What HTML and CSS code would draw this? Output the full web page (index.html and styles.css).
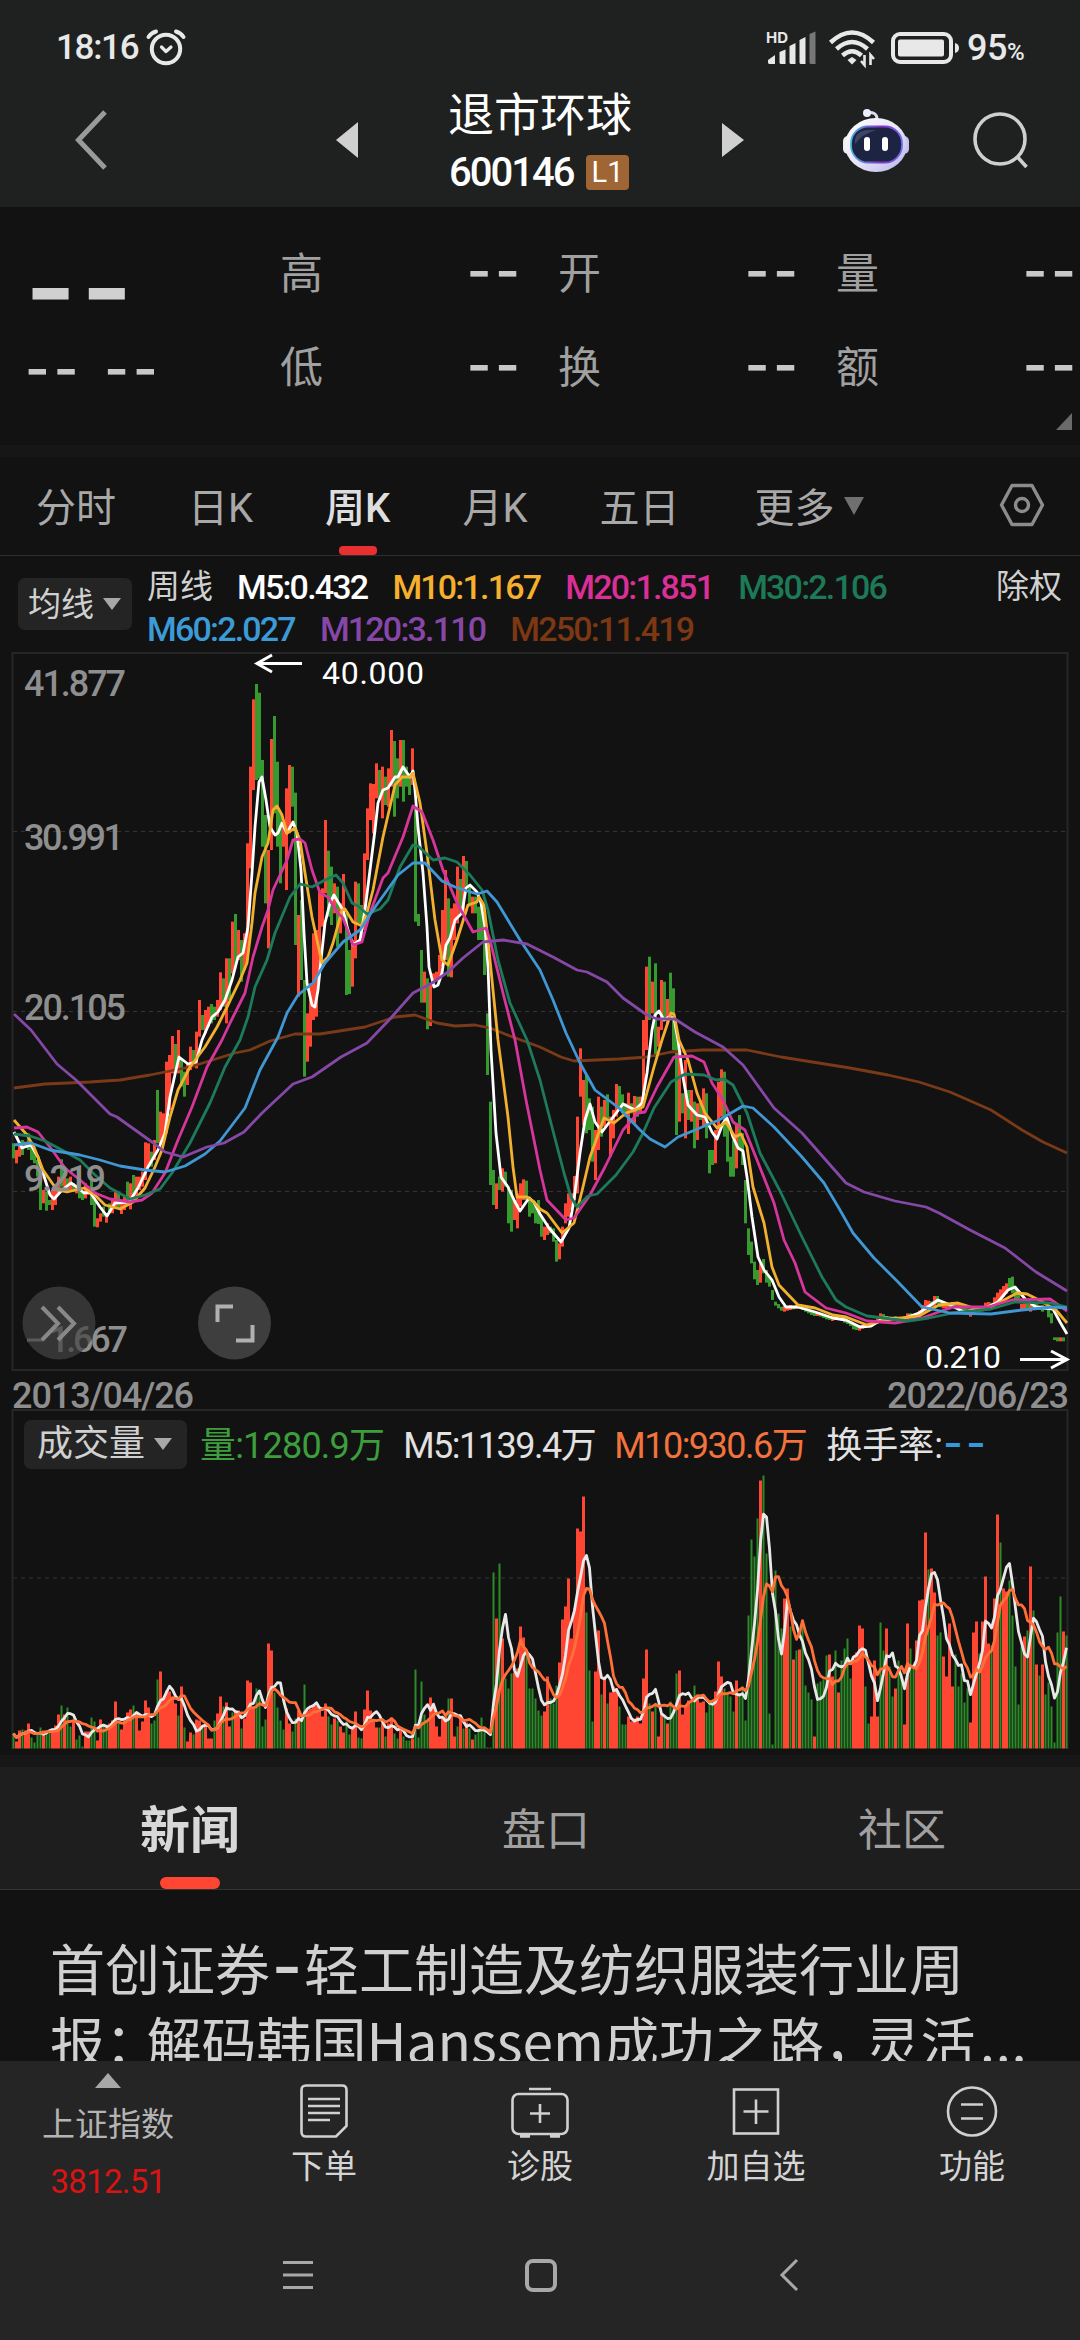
FILE: index.html
```html
<!DOCTYPE html>
<html lang="zh-CN">
  <head>
    <meta charset="UTF-8" />
    <meta name="viewport" content="width=device-width, initial-scale=1.0" />
    <title>退市环球 600146</title>
    <link rel="stylesheet" href="styles.css">
  </head>
  <body>
    <header class="header">
      <div class="status">
        <span class="clock">18:16</span>
        <svg class="alarm" width="40" height="40" viewBox="0 0 40 40" fill="none" stroke="#e8e8e8" stroke-width="4" stroke-linecap="round">
          <circle cx="20" cy="21" r="14.2" />
          <path d="M2.5 9 Q5 5 10 3.5M30 3.5 Q35 5 37.5 9" />
          <path d="M15.5 19 L20 23.5 L25 19" stroke-width="3.2" stroke-linejoin="round" />
        </svg>
        <svg class="signal" width="52" height="36" viewBox="0 0 52 36" fill="#e8e8e8">
          <text x="0" y="13" class="hd">HD</text>
          <path d="M2 33 V30 L9 25 V34 H3z M13.500 33 V22 L19.500 19.500 V34 H14.500z M23.500 33 V16 L29.500 13 V34 H24.500z M33.500 33 V10 L39.500 7 V34 H34.500z" />
          <path d="M43.500 33 V4 L49.500 1.500 V34 H44.500z" fill="#777" />
        </svg>
        <svg class="wifi" width="48" height="38" viewBox="0 0 48 38" fill="none" stroke="#e8e8e8" stroke-width="4.500">
          <path d="M2.500 13.500 Q24 -6.500 45.500 13.500M8.500 20 Q24 6 39.500 20M14.500 26.500 Q24 18 33.500 26.500" />
          <path d="M24 28 L28.500 31 L24 35.500 L19.500 31z" fill="#e8e8e8" stroke="none" />
          <path d="M36.500 26 V36 L33 32M42.500 36 V26 L46 30" stroke-width="2.600" />
        </svg>
        <svg class="battery" width="70" height="32" viewBox="0 0 70 32">
          <rect x="2" y="2" width="58" height="28" rx="7" fill="none" stroke="#e8e8e8" stroke-width="4" />
          <rect x="7" y="7.500" width="46" height="17" rx="2" fill="#e8e8e8" />
          <path d="M64 11 q4 1 4 5 q0 4 -4 5z" fill="#e8e8e8" />
        </svg>
        <span class="percent">95<small>%</small></span>
      </div>
      <div class="titlebar">
        <svg class="back" width="32" height="60" viewBox="0 0 32 60" fill="none" stroke="#9a9a9a" stroke-width="5">
          <path d="M30 2 L3.500 30 L30 58" />
        </svg>
        <svg class="prev" width="22" height="36" viewBox="0 0 22 36" fill="#d0d0d0"><path d="M0 18 L22 0 V36z" /></svg>
        <div class="stock">
          <h1>退市环球</h1>
          <p><span class="code">600146</span><span class="badge">L1</span></p>
        </div>
        <svg class="next" width="22" height="34" viewBox="0 0 22 34" fill="#d0d0d0"><path d="M22 17 L0 0 V34z" /></svg>
        <svg class="robot" width="68" height="64" viewBox="0 0 68 64">
          <defs>
            <linearGradient id="shell" x1="0" y1="0" x2="1" y2="1">
              <stop offset="0" stop-color="#fff" /><stop offset=".5" stop-color="#e8e6f8" /><stop offset="1" stop-color="#b5b2ea" />
            </linearGradient>
            <linearGradient id="rim" x1="0" y1="0" x2="1" y2="0">
              <stop offset="0" stop-color="#4cb2e0" /><stop offset=".6" stop-color="#8330c8" /><stop offset="1" stop-color="#6d6df0" />
            </linearGradient>
          </defs>
          <path d="M24 5 Q35 3 35 11" fill="none" stroke="#dcdaf2" stroke-width="3" />
          <circle cx="25" cy="5" r="4" fill="#eeedfb" />
          <rect x="1" y="28" width="10" height="18" rx="5" fill="#eee" />
          <rect x="57" y="28" width="10" height="18" rx="5" fill="#c4c0f0" />
          <ellipse cx="34" cy="37" rx="31" ry="27" fill="url(#shell)" />
          <rect x="9" y="18.500" width="51" height="36" rx="17" fill="#1d2442" stroke="url(#rim)" stroke-width="1.800" />
          <path d="M13 31 Q15 22 27 22 H34 Q20 26 13 36z" fill="#3c4566" />
          <rect x="22" y="29" width="6" height="14" rx="3" fill="#fff" />
          <rect x="40" y="29" width="6" height="14" rx="3" fill="#fff" />
        </svg>
        <svg class="search" width="56" height="58" viewBox="0 0 56 58" fill="none" stroke="#cfcfcf" stroke-width="3.600">
          <circle cx="27" cy="28" r="25" /><path d="M44.500 46 L53.500 56" />
        </svg>
      </div>
    </header>

    <section class="quote">
      <div class="price"><b>--</b><p><span>--</span><span>--</span></p></div>
      <dl class="fields">
        <div><dt>高</dt><dd>--</dd></div>
        <div><dt>开</dt><dd>--</dd></div>
        <div><dt>量</dt><dd>--</dd></div>
        <div><dt>低</dt><dd>--</dd></div>
        <div><dt>换</dt><dd>--</dd></div>
        <div><dt>额</dt><dd>--</dd></div>
      </dl>
      <i class="corner"></i>
    </section>

    <nav class="periods">
      <span>分时</span>
      <span>日K</span>
      <span class="active">周K</span>
      <span>月K</span>
      <span>五日</span>
      <span class="more">更多<i></i></span>
      <svg width="46" height="44" viewBox="0 0 46 44" fill="none" stroke="#8c8c8c" stroke-width="3.400" stroke-linejoin="round">
        <path d="M13 2.500 H33 L43.500 22 L33 41.500 H13 L2.500 22z" /><circle cx="23" cy="22" r="6.500" />
      </svg>
    </nav>

    <section class="averages">
      <div class="select">均线<i></i></div>
      <div class="legend">
        <span class="name">周线</span>
        <span class="m5">M5:0.432</span>
        <span class="m10">M10:1.167</span>
        <span class="m20">M20:1.851</span>
        <span class="m30">M30:2.106</span>
        <span class="m60">M60:2.027</span>
        <span class="m120">M120:3.110</span>
        <span class="m250">M250:11.419</span>
      </div>
      <span class="adjust">除权</span>
    </section>

    <svg class="kline" width="1080" height="757" viewBox="0 652 1080 757">
      <rect x="12.500" y="653" width="1055" height="717" class="frame" />
      <path d="M13 831.500 H1067M13 1011.500 H1067M13 1191.500 H1067" class="grid" />
      <g id="candles"></g>
      <g id="lines" class="lines"></g>
      <g class="scale">
        <text x="24" y="696" textLength="102">41.877</text>
        <text x="24" y="850" textLength="100">30.991</text>
        <text x="24" y="1020" textLength="102">20.105</text>
        <text x="24" y="1191" textLength="82">9.219</text>
        <text x="49" y="1352" textLength="79">1.667</text>
        <path d="M27 1340 H43" stroke="#8e8e8e" stroke-width="3" />
        <text x="12" y="1408" textLength="182">2013/04/26</text>
        <text x="887" y="1408" textLength="182">2022/06/23</text>
      </g>
      <g class="mark">
        <text x="322" y="684" textLength="102">40.000</text>
        <path d="M302 663.500 H258M272 655 L257 663.500 L272 672" />
        <text x="925" y="1368" textLength="76">0.210</text>
        <path d="M1020 1359.500 H1066M1051 1351 L1067 1359.500 L1051 1368" />
      </g>
      <circle cx="59" cy="1323" r="36.500" fill="#444" opacity=".7" />
      <path d="M42 1307 L58 1323.500 L42 1340M58 1307 L74 1323.500 L58 1340" class="ctrl" stroke="#888" />
      <circle cx="234.500" cy="1323" r="36.500" fill="#3e3e3e" />
      <path d="M233 1306.500 H217.500 V1322M236 1340.500 H252.500 V1325" class="ctrl" stroke="#b0b0b0" />
    </svg>

    <section class="volume">
      <div class="volume-head">
        <div class="select">成交量<i></i></div>
        <span class="vol">量:1280.9万</span>
        <span class="v5">M5:1139.4万</span>
        <span class="v10">M10:930.6万</span>
        <span class="rate">换手率:<b>--</b></span>
      </div>
      <svg width="1080" height="280" viewBox="0 1475 1080 280">
        <path d="M13 1578 H1067" class="grid" />
        <path d="M12.500 1409 V1749M1067.500 1409 V1749" class="frame" />
        <g id="volumes"></g>
        <g id="volumeLines" class="lines"></g>
      </svg>
    </section>

    <nav class="sections">
      <span class="active">新闻</span>
      <span>盘口</span>
      <span>社区</span>
    </nav>

    <main class="news">
      <p>首创证券<span class="dash">-</span>轻工制造及纺织服装行业周<br>报<span class="punct">：</span>解码韩国Hanssem成功之路<span class="punct">，</span>灵活<span class="dots">…</span></p>
    </main>

    <footer class="footer">
      <div class="tools">
        <div class="index"><i></i><span>上证指数</span><em>3812.51</em></div>
        <div>
          <svg width="60" height="56" viewBox="0 0 60 56">
            <path d="M12 2.500 H42 Q46.500 2.500 46.500 7 V43 L36 53.500 H6 Q1.500 53.500 1.500 49 V7 Q1.500 2.500 6 2.500z" transform="translate(6 0)" />
            <path d="M14 16 H46M14 23 H46M14 30 H46M14 37 H36" />
          </svg>下单
        </div>
        <div>
          <svg width="60" height="56" viewBox="0 0 60 56">
            <rect x="2.500" y="11" width="55" height="40" rx="6" /><path d="M19 6 H41M30 21 V40M20 30.500 H40" /><path d="M10 53 H20M40 53 H50" stroke-width="3.500" />
          </svg>诊股
        </div>
        <div>
          <svg width="60" height="56" viewBox="0 0 60 56">
            <rect x="8" y="6.500" width="44" height="44" /><path d="M30 16.500 V41M17.500 28.500 H42.500" />
          </svg>加自选
        </div>
        <div>
          <svg width="60" height="56" viewBox="0 0 60 56">
            <circle cx="30" cy="28.500" r="24" /><path d="M19 21.500 H41M19 35.500 H41" />
          </svg>功能
        </div>
      </div>
      <div class="system">
        <svg width="32" height="34" viewBox="0 0 32 34"><path d="M1 4.500 H31M1 17 H31M1 29.500 H31" /></svg>
        <svg width="34" height="34" viewBox="0 0 34 34"><rect x="3" y="3" width="28" height="29" rx="6" /></svg>
        <svg width="20" height="34" viewBox="0 0 20 34"><path d="M18 2 L3 17 L18 32" /></svg>
      </div>
    </footer>

    <script src="chart.js"></script>
  </body>
</html>
```

FILE: styles.css
```css
* {
  box-sizing: border-box;
}
body {
  margin: 0;
  width: 1080px;
  height: 2340px;
  overflow: hidden;
  background-color: #121212;
  color: #d0d0d0;
  font-family: Roboto, "Noto Sans CJK SC", sans-serif;
}
h1,
p,
dl,
dd {
  margin: 0;
  font-weight: normal;
}
svg {
  display: block;
  flex: none;
  overflow: visible;
}

/* header */
.header {
  height: 207px;
  background: #1f2120;
}
.status {
  display: flex;
  align-items: center;
  height: 94px;
  padding: 1px 0 0 56px;
  color: #e8e8e8;
}
.clock {
  width: 90px;
  font-size: 35px;
  font-weight: 500;
  letter-spacing: -1.3px;
}
.signal {
  margin-left: 580px;
}
.hd {
  font: 700 15px Inter, sans-serif;
}
.wifi {
  margin-left: 10px;
}
.battery {
  margin-left: 15px;
}
.percent {
  margin-left: 6px;
  font-size: 36px;
  font-weight: 500;
  white-space: nowrap;
  letter-spacing: -.5px;
}
.percent small {
  font-size: 24px;
}
.titlebar {
  display: flex;
  align-items: center;
  height: 92px;
  padding-left: 75px;
}
.prev {
  margin-left: 229px;
}
.stock {
  width: 190px;
  margin-left: 90px;
  padding-top: 6px;
}
.stock h1 {
  color: #fff;
  font-size: 46px;
  line-height: 58px;
  white-space: nowrap;
}
.stock p {
  display: flex;
  align-items: center;
  height: 56px;
  padding-left: 1px;
}
.code {
  width: 137px;
  color: #fff;
  font-size: 40px;
  font-weight: 500;
  letter-spacing: -2px;
}
.badge {
  width: 43px;
  height: 35px;
  border-radius: 4px;
  background: #a06535;
  color: #fff;
  font-size: 29px;
  line-height: 35px;
  text-align: center;
}
.next {
  margin-left: 84px;
}
.robot {
  margin-left: 98px;
}
.search {
  margin-left: 63px;
}

/* quote */
.quote {
  position: relative;
  display: flex;
  height: 238px;
}
.price {
  width: 282px;
  padding: 25px 0 0 25px;
}
.price b {
  display: block;
  height: 111px;
  font: 600 110px/111px Inter, sans-serif;
  letter-spacing: 5px;
}
.price p {
  display: flex;
  gap: 22px;
}
.price span,
.fields dd {
  color: #c8c8c8;
  font: 600 53px/52px Inter, sans-serif;
  letter-spacing: 4px;
}
.fields {
  display: grid;
  grid-template-columns: repeat(3, 244px);
  grid-template-rows: 94px 94px;
  column-gap: 34px;
  padding-top: 17px;
}
.fields div {
  display: flex;
  align-items: center;
  justify-content: space-between;
}
.fields dt {
  padding-top: 5px;
  color: #a0a0a0;
  font-size: 43px;
  line-height: 60px;
}
.corner {
  position: absolute;
  right: 8px;
  bottom: 15px;
  border: solid transparent;
  border-width: 17px 0 0 16px;
  border-bottom: 17px solid #6a6a6a;
  border-top: 0;
}

/* period tabs */
.periods {
  display: flex;
  align-items: center;
  gap: 72px;
  height: 111px;
  padding: 0 35px 2px 36px;
  border-top: 12px solid #161616;
  border-bottom: 1px solid #2e2e2e;
  color: #a8a8a8;
  font-size: 40px;
  white-space: nowrap;
}
.periods span {
  position: relative;
}
.periods .active {
  color: #dedede;
  font-weight: 500;
}
.periods .active::after {
  content: "";
  position: absolute;
  left: 14px;
  top: 70px;
  width: 38px;
  height: 9px;
  border-radius: 4px;
  background: #e83030;
}
.periods svg {
  margin-left: auto;
}
.periods .more {
  margin-left: 3px;
}
.more i,
.select i {
  display: inline-block;
  margin-left: 9px;
  vertical-align: 7px;
  border: 10px solid transparent;
  border-top: 18px solid #707070;
  border-bottom: 0;
}

/* moving averages */
.averages {
  display: flex;
  height: 96px;
  padding: 10px 18px 0 18px;
}
.select {
  width: 114px;
  height: 52px;
  margin-top: 12px;
  padding-left: 10px;
  border-radius: 7px;
  background: #242424;
  font-size: 33px;
  line-height: 53px;
  white-space: nowrap;
}
.select i {
  border-width: 12px 9px 0;
  border-top-color: #a8a8a8;
  vertical-align: 6px;
}
.legend {
  display: flex;
  flex: 1;
  flex-wrap: wrap;
  align-content: flex-start;
  column-gap: 25px;
  padding-left: 15px;
  font-size: 34px;
  font-weight: 500;
  letter-spacing: -1.8px;
  line-height: 42px;
}
.legend .name {
  margin-right: -1px;
  font-size: 33px;
  font-weight: 400;
  letter-spacing: 0;
}
.m5 { color: #fff; }
.m10 { color: #f5b02e; }
.m20 { color: #d92f96; }
.m30 { color: #1c7a58; }
.m60 { color: #3c9bd6; }
.m120 { color: #8747a8; }
.m250 { color: #7c3713; }
.adjust {
  font-size: 33px;
  line-height: 42px;
}

/* charts */
.frame {
  fill: none;
  stroke: #262626;
  stroke-width: 2;
}
.grid {
  stroke: #333;
  stroke-dasharray: 4 4;
}
.lines {
  fill: none;
  stroke-width: 2.8;
  stroke-linejoin: round;
}
.scale {
  fill: #8e8e8e;
  font-size: 36px;
  font-weight: 500;
}
.mark {
  fill: #fff;
  stroke-width: 3;
  font-size: 32px;
}
.mark path {
  fill: none;
  stroke: #fff;
}
.ctrl {
  fill: none;
  stroke-width: 4;
}
.volume-head {
  display: flex;
  align-items: center;
  height: 66px;
  margin: 0 12px;
  padding: 0 0 3px 12px;
  border-top: 2px solid #262626;
  font-size: 36px;
  letter-spacing: -1.5px;
  white-space: nowrap;
}
.volume .select {
  width: 163px;
  height: 49px;
  margin: 6px 0 0;
  padding-left: 13px;
  font-size: 36px;
  letter-spacing: 0;
  line-height: 48px;
}
.vol {
  margin-left: 13px;
  color: #3c9f3c;
  letter-spacing: -.8px;
}
.v5 {
  margin-left: 19px;
  color: #e2e2e2;
}
.v10 {
  margin-left: 19px;
  color: #f2733d;
}
.rate {
  margin-left: 20px;
  color: #e2e2e2;
  letter-spacing: 0;
}
.rate b {
  color: #3399dd;
  font: 500 43px/30px Inter, sans-serif;
  letter-spacing: 3px;
}

/* sections and news */
.sections {
  display: flex;
  height: 135px;
  padding: 0 0 0 12px;
  border-top: 12px solid #171717;
  border-bottom: 1px solid #333;
  background: #1e1e1e;
  color: #a0a0a0;
  font-size: 44px;
  line-height: 128px;
  text-align: center;
}
.sections span {
  position: relative;
  flex: 1;
}
.sections .active {
  color: #d8d8d8;
  font-size: 50px;
  font-weight: 700;
}
.sections .active::after {
  content: "";
  position: absolute;
  left: 50%;
  bottom: 0;
  width: 60px;
  height: 12px;
  margin-left: -30px;
  border-radius: 6px;
  background: #ff4632;
}
.news {
  height: 171px;
  padding: 40px 0 0 50px;
  overflow: hidden;
  font-family: "Noto Sans CJK SC", sans-serif;
  font-size: 55px;
  line-height: 73px;
  white-space: nowrap;
}
.dash {
  display: inline-block;
  width: 34px;
  font: 500 66px/60px Inter, sans-serif;
  text-align: center;
}
.punct {
  letter-spacing: -13.5px;
}
.dots {
  margin-left: 4px;
  font-family: Inter, sans-serif;
}

/* footer */
.footer {
  height: 279px;
  background: #252525;
}
.tools {
  display: grid;
  grid-template-columns: repeat(5, 1fr);
  height: 182px;
  color: #d4d4d4;
  font-size: 33px;
  line-height: 55px;
}
.tools div {
  display: flex;
  flex-direction: column;
  align-items: center;
  padding-top: 22px;
}
.tools svg,
.system svg {
  fill: none;
  stroke: #d0d0d0;
  stroke-width: 2.6;
}
.tools .index {
  padding-top: 12px;
  color: #b4b4b4;
}
.index i {
  border: 13px solid transparent;
  border-top: 0;
  border-bottom: 15px solid #a8a8a8;
}
.index span {
  margin-top: 9px;
}
.index em {
  margin-top: 2px;
  color: #d81414;
  font-style: normal;
  letter-spacing: -.7px;
}
.system {
  display: flex;
  justify-content: center;
  gap: 210px;
  padding-top: 15px;
}
.system svg {
  stroke: #a8a8a8;
  stroke-width: 3;
}
.system svg:nth-child(2) {
  stroke-width: 4;
}
.system svg:last-child {
  margin-left: 11px;
}
```

FILE: chart.js
```js
const SVG_NS = "http://www.w3.org/2000/svg";
const RED = "#ff4632";
const GREEN = "#369a2f";
const STEP = 3;
const FIRST_X = 12;

// Candle ranges, three units to a pixel, counted down from each block's base
const candleBlocks = [
  { start: 0, base: 1000, data: "g430-475 r450-490 r435-470 g420-465 r425-440 g400-450 g430-480 g450-490 g480-530 g540-630 r570-610 g575-632 g600-615 r570-630 r570-615 r530-580 g478-560 r520-560 g535-575 r530-575 g550-575 r560-580 g565-595 g575-600 r550-595 r560-585 g530-615 g600-680 r655-682 r640-665 g620-650 r640-668 g610-640 r600-640 r570-625 g580-625 r605-642 r590-630 g545-600 r550-628 g525-600 r530-590 r530-570 r515-560 r427-540 r430-500 g455-500 r420-480 g270-430 r335-430 r340-410 r185-400 r165-330 r108-220 g132-210 r90-220 g180-260 g215-290 r190-255 r140-210 g150-200 r95-205" },
  { start: 62, base: 640, data: "r1080-1190 g1125-1170 r1110-1180 r1100-1160 g1092-1150 g1100-1140 r1080-1130 r997-1110 g1015-1100 r955-1150 g955-1080 r845-1000 g822-980 r870-960 g900-1025 r880-990 r610-960 r380-685 r178-450 g132-420 g158-415 g360-620 g525-790 r630-925 r297-630 g228-520 g365-620 g520-730 r550-620 r445-750 r375-580 g380-500 g458-915 r825-1070 g780-1020 g1020-1310 r1120-1265 r1030-1220 r880-1140 r870-1130 r750-1000 r745-860 r540-760 g632-830 g680-855 r730-820 g740-920 r790-880 r702-830 g820-1065 g930-1062 r900-1040 r725-955 g730-850 g795-905 r640-870 r505-660 r430-540 r432-580 r370-475 g390-480 r380-535 g410-495 r385-500 r270-440 g303-530 g355-475 r300-440 g300-485 g380-440 g400-465 r325-435 g500-845 g822-858 g930-1088 r995-1088 g1015-1168 r1030-1158 r1000-1040 r995-1020 r945-1015 r810-980 r690-960 g775-1010 r805-1012 r790-900 r680-850 g717-820 r648-820 g663-740 g735-800 r770-820 g770-820 g800-900 g790-900 g850-1005 g1120-1305" },
  { start: 159, base: 1000, data: "g305-555 g510-615 r550-627 g530-570 r505-575 g515-560 g560-670 g570-695 r600-660 r580-685 r550-620 r538-600 g542-600 g590-650 g600-640 g610-670 g600-672" },
  { start: 176, base: 900, data: "g950-1010 r980-1020 r970-1005 g980-1000 g985-1025 g1020-1085 r1030-1078 r980-1040 r910-970 r880-950 r880-930 r828-900 r650-880 r445-590 r540-675 g525-700 g595-690 g620-785 r690-840 r590-750 g620-710 r600-680 g583-660 r650-770 r630-715 r552-650 g558-620 g583-640 g610-650 r578-702 g610-640 r588-670 g590-650 r590-640 r360-600 r200-450 g170-360 r245-340 g190-470 r380-440 r240-390 g245-360 r297-370 g218-360 g265-450 g380-705 r450-665 g580-640 r480-715 g570-660 r570-665 g605-745 r610-720 g600-660 r565-680 g580-715 g750-820 g750-795 r690-790 r545-700 r508-650 g515-710 g660-785 g770-830 g720-830 r670-805 g645-750 g700-795 g840-970 g985-1065 g1025-1090 g1085-1138 g1110-1155 r1090-1148 g1077-1120 g1110-1148 g1130-1160 g1170-1200 g1205-1217 g1212-1225 g1220-1232 r1218-1235 r1218-1232 r1215-1230 g1217-1228 r1215-1226 g1216-1226 g1218-1230 g1222-1235 g1225-1240 g1230-1245 g1235-1248 r1236-1248 g1238-1250 g1242-1254 g1245-1258 g1248-1260 r1248-1263 g1250-1260 r1246-1258 g1250-1262 g1254-1268 g1260-1272 g1265-1278 g1270-1288 g1278-1290 r1276-1292 r1274-1286 g1272-1284 r1270-1282 r1268-1280 r1260-1275 r1255-1272 r1240-1265 g1242-1260 g1248-1262 r1250-1264 r1250-1260 g1248-1260 r1250-1262 g1252-1262 r1250-1262 r1240-1256 g1240-1256 r1242-1256 g1245-1256 r1232-1250 r1215-1245 r1200-1232 r1202-1228 g1204-1225 r1188-1220 g1188-1212 g1200-1222 r1208-1225 r1210-1230 g1210-1228 r1206-1225 g1208-1224 r1210-1226 g1212-1232 g1220-1236 g1225-1245 r1226-1250 g1225-1240 r1220-1236 g1220-1236 r1218-1234 r1208-1230 r1206-1225 g1208-1224 r1192-1218 r1178-1210 r1168-1200 r1158-1190 r1150-1180 g1134-1170 g1130-1180 g1160-1200 g1170-1205 r1212-1230 r1210-1228 g1205-1225 r1215-1235 g1215-1228 g1212-1228 r1216-1230 g1215-1235 g1218-1230 g1225-1252 g1240-1270 g1312-1320 g1312-1324 r1312-1324 g1312-1324" }
];

const averages = [
  { color: "#7a3a18", points: "14,1088 45,1084 90,1082 120,1080 150,1075 190,1067 235,1053 250,1050 270,1041 295,1034 320,1034 365,1027 395,1017 415,1015 437,1023 455,1026 475,1025 490,1028 510,1036 540,1047 561,1057 574,1061 619,1059 647,1057 671,1052 702,1050 747,1050 781,1057 850,1068 888,1075 919,1082 950,1092 991,1110 1022,1130 1043,1142 1067,1153" },
  { color: "#fff", points: "14,1132 22,1148 31,1145 38,1157 43,1173 50,1195 54,1199 62,1190 71,1183 77,1187 84,1193 90,1192 100,1207 107,1216 115,1203 129,1202 138,1188 148,1167 158,1150 165,1133 170,1097 176,1070 179,1057 188,1064 196,1062 202,1040 212,1017 218,1012 225,1000 232,980 238,957 243,953 248,927 252,873 255,827 259,782 262,777 266,800 270,827 275,835 278,833 282,823 287,833 293,822 297,833 301,870 304,933 307,983 312,1005 315,1007 318,990 321,960 325,923 330,903 334,895 338,902 343,910 348,930 353,945 360,940 365,910 370,870 375,830 378,803 383,790 388,788 395,777 398,777 403,767 410,777 413,771 415,790 418,827 423,873 427,927 429,967 434,987 438,985 442,973 446,945 450,938 455,920 462,913 466,888 470,885 477,892 481,903 485,927 488,967 491,1050 496,1133 501,1177 508,1187 515,1202 520,1211 529,1198 534,1202 540,1214 549,1228 561,1242 569,1228 574,1200 580,1153 585,1120 590,1104 595,1122 602,1132 611,1120 623,1104 635,1110 642,1103 647,1073 652,1030 655,1015 659,1011 664,1020 669,1017 674,1018 678,1040 683,1077 688,1105 697,1115 705,1117 712,1132 717,1139 723,1123 727,1118 733,1137 738,1148 743,1151 747,1177 752,1217 758,1257 764,1270 772,1280 779,1297 786,1307 798,1307 815,1312 833,1318 846,1320 860,1327 871,1326 884,1318 902,1319 919,1313 938,1300 948,1304 964,1312 988,1307 998,1302 1008,1290 1015,1287 1026,1300 1036,1307 1053,1309 1060,1322 1067,1334" },
  { color: "#f3b02f", points: "14,1120 27,1135 34,1147 43,1170 57,1190 67,1192 84,1188 95,1195 105,1205 120,1209 133,1202 145,1188 155,1167 162,1150 170,1117 178,1090 190,1067 205,1047 217,1027 227,1007 240,980 247,963 252,923 255,893 262,857 268,843 273,810 277,806 282,815 287,833 295,828 300,840 305,873 312,917 322,963 328,957 333,943 342,910 345,909 353,922 362,926 367,913 373,890 383,837 395,785 402,777 410,777 413,773 420,803 427,853 435,920 442,960 448,965 457,940 468,905 477,902 479,897 484,905 488,940 493,990 498,1040 508,1117 513,1167 517,1197 527,1197 534,1202 540,1209 547,1213 562,1233 574,1223 583,1187 590,1157 604,1118 614,1123 626,1113 643,1107 654,1067 662,1040 671,1013 674,1014 679,1040 688,1060 697,1093 705,1113 717,1128 726,1122 735,1137 741,1134 747,1147 753,1187 764,1223 772,1267 779,1285 798,1305 815,1308 833,1315 846,1317 867,1325 884,1320 919,1316 939,1305 958,1303 974,1308 991,1307 1017,1293 1027,1294 1039,1300 1056,1310 1067,1323" },
  { color: "#d6359b", points: "14,1128 27,1127 38,1132 50,1147 65,1168 80,1180 95,1193 110,1199 130,1202 142,1200 152,1193 165,1173 178,1140 192,1107 207,1067 222,1040 230,1023 245,993 253,957 262,927 268,910 273,890 287,860 293,840 300,839 305,843 312,870 320,893 328,897 337,912 343,918 353,945 362,942 370,913 383,878 388,873 403,837 413,806 422,812 433,840 443,870 457,903 473,932 486,928 490,940 503,993 515,1040 526,1100 540,1170 547,1200 566,1220 574,1218 590,1195 605,1167 623,1130 638,1113 645,1112 657,1087 674,1057 692,1056 704,1062 712,1083 723,1100 733,1122 745,1130 757,1160 774,1203 784,1240 795,1263 805,1292 826,1308 846,1313 867,1321 895,1323 922,1318 953,1307 988,1307 1012,1300 1050,1299 1067,1311" },
  { color: "#1d7a5a", points: "14,1134 30,1136 45,1141 62,1150 80,1160 95,1175 110,1188 130,1199 145,1195 160,1189 172,1173 190,1143 210,1103 225,1067 240,1040 248,1017 255,987 267,960 275,933 290,897 300,884 312,887 325,880 336,875 343,883 352,903 358,906 367,914 380,909 388,900 400,867 413,845 418,846 433,860 445,858 457,862 470,875 482,890 488,910 498,960 510,1003 527,1040 540,1080 552,1127 564,1173 571,1197 577,1207 588,1196 597,1194 616,1175 633,1152 643,1133 654,1108 671,1082 685,1074 704,1075 716,1080 724,1079 733,1085 747,1113 760,1153 781,1193 802,1237 822,1277 836,1300 846,1307 867,1316 908,1321 929,1318 953,1313 991,1309 1015,1302 1050,1303 1067,1307" },
  { color: "#3f97d3", points: "14,1145 31,1143 50,1150 80,1155 100,1160 120,1166 145,1170 165,1172 185,1166 205,1154 220,1141 245,1108 260,1070 278,1037 287,1013 298,995 313,983 325,963 343,942 360,930 373,910 398,875 413,863 425,863 442,881 455,887 477,894 487,891 497,902 520,940 540,970 553,1000 566,1033 580,1063 595,1090 619,1108 640,1130 650,1139 665,1147 678,1137 695,1130 719,1120 743,1106 753,1108 774,1127 802,1157 824,1183 840,1210 853,1233 874,1258 898,1282 922,1307 950,1313 991,1314 1022,1310 1053,1307 1067,1308" },
  { color: "#8648a6", points: "14,1014 31,1030 57,1064 76,1080 110,1114 117,1117 152,1142 165,1152 183,1157 207,1147 224,1143 244,1132 262,1113 293,1084 312,1077 341,1057 367,1043 389,1020 413,993 432,983 448,972 463,958 483,942 503,940 527,944 553,957 577,970 587,972 607,982 623,998 647,1015 657,1019 675,1019 695,1032 723,1047 743,1065 774,1108 802,1133 846,1183 864,1192 895,1201 926,1207 939,1213 970,1230 1005,1248 1036,1272 1067,1291" }
];

const volumeData = (
  "g15 r7 r18 g19 r18 r25 g11 g6 g15 g21 r18 g18 g17 r20 r23 r34 g43 r34 g41 g22 " +
  "r27 g9 g13 g2 r17 r17 g31 g27 r8 r29 g22 g24 r25 r28 r47 g25 r19 r28 r36 r39 " +
  "g43 r34 r18 r27 r48 r41 g25 g28 g69 r77 r50 r58 r57 r52 r45 g33 r62 g21 r7 r16 " +
  "g14 r29 r28 g24 r22 r10 r10 g28 r35 r52 g42 r46 r22 g36 r38 r38 g20 r30 r68 r66 " +
  "r42 g60 g52 g22 g29 r105 r98 g56 g41 g28 g19 r40 r25 g17 g30 r38 g29 g64 r38 r40 " +
  "r44 r43 r38 r32 r45 g32 g24 r30 g28 r22 r16 g27 g14 r22 r37 g11 g10 r39 r58 r38 " +
  "r28 r21 g21 r25 g12 r25 r31 g15 g10 r20 g12 g8 g8 r10 g79 g11 g67 g34 g28 r51 " +
  "r42 r22 r12 r30 r32 g50 r50 r12 g22 r30 g20 r26 g20 r9 g14 g20 g31 g16 g1 g1 " +
  "g176 r130 g185 r110 g70 g60 g75 r76 r80 r122 r111 g95 g60 g60 g50 g38 g33 r37 r72 g50 " +
  "g45 g63 r86 r129 r142 r170 r110 r140 r220 r217 r252 g136 g78 g27 r77 r118 g54 r72 g45 r56 " +
  "r62 r60 g42 g24 g24 r32 r27 r30 r32 r25 r70 r99 g45 r37 g45 r12 r35 g33 r25 g47 " +
  "g40 g75 r78 r34 r43 r48 g50 g63 r50 r46 r47 g36 g48 g44 r57 r87 r72 g60 g55 g52 " +
  "g37 r68 g55 g62 g28 g133 g209 g192 g230 r268 g273 g195 g35 g4 g178 g135 g120 r150 r160 g122 " +
  "r89 g98 r99 g128 g63 g56 g49 r12 g65 g67 g69 g93 r94 r72 g98 r56 g88 g100 g110 g70 " +
  "r90 r96 r123 r120 g62 g25 r32 r88 r32 g126 g98 r120 g82 g52 r60 g88 g75 r24 r125 g100 " +
  "g84 r108 r148 r149 r216 g179 r180 r156 g113 g116 r92 r72 r125 r62 g94 g62 g75 g46 g60 r26 " +
  "r116 r127 g95 r127 r172 r105 g103 r150 r234 g206 r160 r157 g168 g133 g82 g44 g102 r112 g118 r182 " +
  "g138 r84 g73 r84 g54 g66 g42 g6 g116 g152 r117 g113"
).split(" ").map((item) => ({ color: item[0], value: Number(item.slice(1)) }));

function draw(parent, tag, attrs) {
  const el = document.createElementNS(SVG_NS, tag);
  Object.keys(attrs).forEach((key) => el.setAttribute(key, attrs[key]));
  document.getElementById(parent).appendChild(el);
}

candleBlocks.forEach((block) => {
  block.data.split(" ").forEach((item, i) => {
    const [high, low] = item.slice(1).split("-").map(Number);
    draw("candles", "rect", {
      x: FIRST_X + (block.start + i) * STEP,
      y: block.base + high / 3,
      width: 3,
      height: (low - high) / 3,
      fill: item[0] === "r" ? RED : GREEN
    });
  });
});

averages.forEach((line) => {
  draw("lines", "polyline", { points: line.points, stroke: line.color });
});

const BASELINE = 1748.5;
volumeData.forEach((bar, i) => {
  const up = bar.color === "r";
  draw("volumes", "rect", {
    x: FIRST_X + i * STEP + (up ? 0 : 0.5),
    y: BASELINE - bar.value,
    width: up ? 3 : 2,
    height: bar.value,
    fill: up ? RED : "#2c8a29"
  });
});

// Moving average of the volume over the last `size` weeks
function volumeAverage(size) {
  return volumeData.map((bar, i) => {
    const part = volumeData.slice(Math.max(0, i - size + 1), i + 1);
    const sum = part.reduce((total, item) => total + item.value, 0);
    return `${FIRST_X + 1.5 + i * STEP},${BASELINE - sum / part.length}`;
  }).join(" ");
}

draw("volumeLines", "polyline", { points: volumeAverage(5), stroke: "#e8e8e8" });
draw("volumeLines", "polyline", { points: volumeAverage(10), stroke: "#ff7038" });
```
